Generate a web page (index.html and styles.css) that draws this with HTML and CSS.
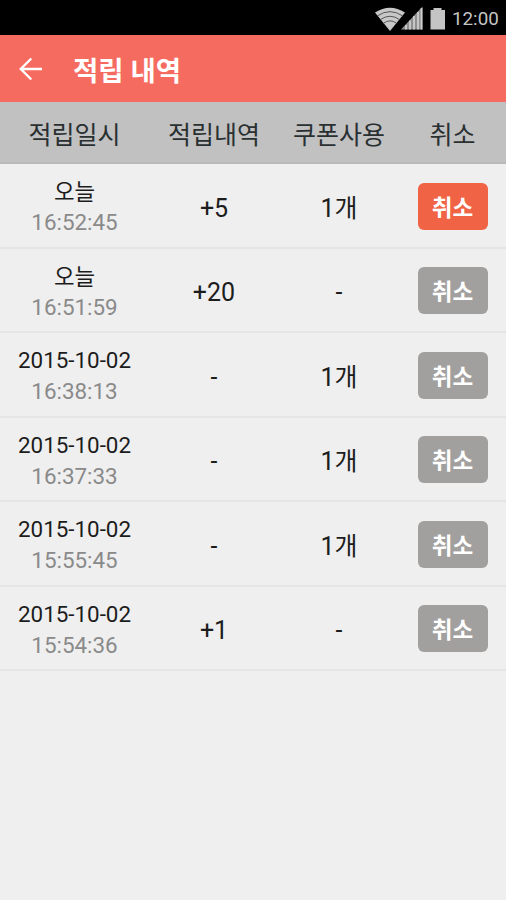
FILE: index.html
```html
<!DOCTYPE html>
<html lang="ko">
  <head>
    <meta charset="utf-8">
    <title>적립 내역</title>
    <link rel="stylesheet" href="styles.css">
  </head>
  <body>

    <div class="status">
      <svg class="status-icons" width="71" height="26" viewBox="0 0 71 26">
        <!-- wifi -->
        <path d="M0 7.5Q15 -2 30 7.5L15 26Z" fill="#c8c8c8"/>
        <path d="M2.5 10.8Q15 2.5 27.5 10.8M5.5 14.5Q15 8 24.5 14.5M8.5 18.2Q15 13.5 21.5 18.2" fill="none" stroke="#555" stroke-width="1"/>
        <!-- signal -->
        <path d="M26 24.5L47.5 1.5V24.5Z" fill="#8f8f8f"/>
        <path d="M31 20V24.5M35 15.5V24.5M39 11V24.5M43 7V24.5M46.5 3V24.5" fill="none" stroke="#ccc" stroke-width="1.8"/>
        <!-- battery -->
        <path d="M55.5 5H58.5V3H66.5V5H70V24.5H55.5Z" fill="#c4c4c4"/>
      </svg>
      <span class="clock">12:00</span>
    </div>

    <header class="bar">
      <svg class="back" width="24" height="24" viewBox="0 0 24 24">
        <path d="M12.3 1.5L1.8 12L12.3 22.5M1.8 12H23" fill="none" stroke="#fff" stroke-width="2.4"/>
      </svg>
      <h1>적립 내역</h1>
    </header>

    <table class="history">
      <thead>
        <tr>
          <th class="col-date">적립일시</th>
          <th class="col-points">적립내역</th>
          <th class="col-coupon">쿠폰사용</th>
          <th class="col-cancel">취소</th>
        </tr>
      </thead>
      <tbody>
        <tr>
          <td><div class="date today">오늘</div><div class="time">16:52:45</div></td>
          <td>+5</td>
          <td>1개</td>
          <td><button class="cancel active">취소</button></td>
        </tr>
        <tr>
          <td><div class="date today">오늘</div><div class="time">16:51:59</div></td>
          <td>+20</td>
          <td>-</td>
          <td><button class="cancel">취소</button></td>
        </tr>
        <tr>
          <td><div class="date">2015-10-02</div><div class="time">16:38:13</div></td>
          <td>-</td>
          <td>1개</td>
          <td><button class="cancel">취소</button></td>
        </tr>
        <tr>
          <td><div class="date">2015-10-02</div><div class="time">16:37:33</div></td>
          <td>-</td>
          <td>1개</td>
          <td><button class="cancel">취소</button></td>
        </tr>
        <tr>
          <td><div class="date">2015-10-02</div><div class="time">15:55:45</div></td>
          <td>-</td>
          <td>1개</td>
          <td><button class="cancel">취소</button></td>
        </tr>
        <tr>
          <td><div class="date">2015-10-02</div><div class="time">15:54:36</div></td>
          <td>+1</td>
          <td>-</td>
          <td><button class="cancel">취소</button></td>
        </tr>
      </tbody>
    </table>

  </body>
</html>
```
FILE: styles.css
```css
*,
*:before,
*:after {
  box-sizing: border-box;
}

body {
  margin: 0;
  min-height: 900px;
  background: #efefef;
  color: #1c1c1c;
  font-family: Roboto, "Noto Sans CJK KR", sans-serif;
}

.status {
  display: flex;
  justify-content: flex-end;
  align-items: center;
  height: 35px;
  padding-right: 8px;
  background: #000;
}

.status-icons {
  margin-right: 6px;
}

.clock {
  width: 46px;
  padding-top: 3px;
  color: #c4c4c4;
  font-size: 18.8px;
  line-height: 32px;
  white-space: nowrap;
}

.bar {
  display: flex;
  align-items: center;
  height: 67px;
  padding-left: 19px;
  background: #f66b60;
}

.bar h1 {
  margin: 0 0 0 30px;
  padding-top: 6px;
  color: #fff;
  font-size: 27.5px;
  font-weight: bold;
  line-height: 61px;
}

.history {
  width: 100%;
  table-layout: fixed;
  border-collapse: separate;
  border-spacing: 0;
  text-align: center;
}

.history th {
  height: 62px;
  padding: 8px 0 0;
  border-bottom: 2px solid #b9b9b9;
  background: #c1c1c1;
  color: #2a3032;
  font-size: 25px;
  font-weight: normal;
  line-height: 52px;
}

.col-date {
  width: 149px;
}

.col-points {
  width: 130px;
}

.col-coupon {
  width: 120px;
}

.history td {
  height: 84.5px;
  padding: 7px 0 0;
  border-bottom: 2px solid #e5e5e5;
  font-size: 25px;
  line-height: 36px;
  vertical-align: middle;
}

.history .date,
.history .time {
  font-size: 22.4px;
  line-height: 31px;
}

.history .time {
  margin-bottom: 3px;
  color: #8a8a8a;
}

/* hangul sits a little higher than the digits */
.history .today {
  padding-top: 2px;
  line-height: 29px;
}

.cancel {
  display: block;
  width: 70px;
  height: 47px;
  margin: 0 auto 5px;
  padding: 4px 0 0;
  border: 0;
  border-radius: 6px;
  background: #a2a09e;
  color: #fff;
  font-family: inherit;
  font-size: 22.5px;
  font-weight: bold;
  line-height: 43px;
}

.cancel.active {
  background: #f16345;
}
```
